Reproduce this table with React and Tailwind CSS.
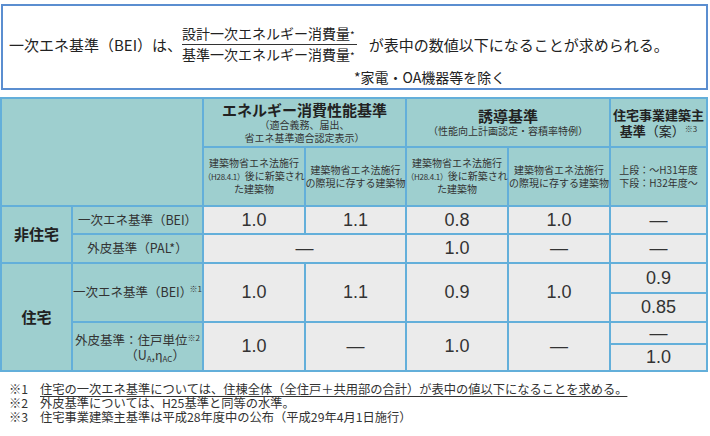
import React from "react";

const head = "bg-[#9ecfcf] flex items-center justify-center text-center text-[#222]";
const body = "bg-[#ebebeb] flex items-center justify-center text-[18px] text-[#333] font-['Liberation_Sans',Arial,sans-serif]";

function Sub({ lines }) {
  return (
    <div className={`${head} flex-col text-[10px] leading-[12.5px] text-[#333]`}>
      {lines.map((l, i) => (
        <span key={i} className="whitespace-nowrap">{l}</span>
      ))}
    </div>
  );
}

function Label({ children, className = "" }) {
  return <div className={`${head} text-[12.5px] text-[#333] ${className}`}>{children}</div>;
}

function Val({ children, className = "" }) {
  return <div className={`${body} ${className}`}>{children}</div>;
}

const after = (
  <>
    <span className="text-[8px] tracking-[-0.3px]">（H28.4.1）</span>後に新築され
  </>
);

export default function App() {
  return (
    <div className="w-[710px] h-[436px] bg-white font-['Noto_Sans_CJK_JP','Noto_Sans',sans-serif] text-[#222]">
      {/* formula box */}
      <div className="ml-[1px] mt-[4px] w-[707px] h-[86px] border-2 border-[#5b8ed0] pl-[6px] pt-[18px]">
        <div className="flex items-center text-[15px] leading-[19px]">
          <span className="whitespace-nowrap">一次エネ基準（BEI）は、</span>
          <div className="flex flex-col text-[14px] leading-[19px]">
            <span className="border-b border-[#333] whitespace-nowrap pr-[2px]">
              設計一次エネルギー消費量<span className="text-[10px]">*</span>
            </span>
            <span className="whitespace-nowrap">
              基準一次エネルギー消費量<span className="text-[10px]">*</span>
            </span>
          </div>
          <span className="ml-[12px] whitespace-nowrap">が表中の数値以下になることが求められる。</span>
        </div>
        <div className="mt-[4px] pl-[345px] text-[14px] leading-[16px] whitespace-nowrap">*家電・OA機器等を除く</div>
      </div>

      {/* table */}
      <div className="mt-[7px] grid w-[708px] grid-cols-[69px_129px_100px_99px_100px_100px_95px] grid-rows-[47px_57px_26px_27px_28px_27px_20px_25px] gap-[2px] bg-[#63afda] p-[2px]">
        <div className={`${head} col-span-2 row-span-2`} />
        <div className={`${head} col-span-2 flex-col`}>
          <span className="text-[15px] font-bold leading-[17px]">エネルギー消費性能基準</span>
          <span className="text-[10px] leading-[13px] text-[#333]">（適合義務、届出、</span>
          <span className="text-[10px] leading-[13px] text-[#333]">省エネ基準適合認定表示）</span>
        </div>
        <div className={`${head} col-span-2 flex-col`}>
          <span className="text-[15px] font-bold leading-[17px]">誘導基準</span>
          <span className="text-[10px] leading-[14px] text-[#333]">（性能向上計画認定・容積率特例）</span>
        </div>
        <div className={`${head} flex-col`}>
          <span className="text-[13px] font-bold leading-[16px]">住宅事業建築主</span>
          <span className="text-[13px] font-bold leading-[16px]">
            基準<span className="font-normal">（案）</span>
            <sup className="text-[8px] font-normal text-[#333]">※3</sup>
          </span>
        </div>

        <Sub lines={["建築物省エネ法施行", after, "た建築物"]} />
        <Sub lines={["建築物省エネ法施行", "の際現に存する建築物"]} />
        <Sub lines={["建築物省エネ法施行", after, "た建築物"]} />
        <Sub lines={["建築物省エネ法施行", "の際現に存する建築物"]} />
        <Sub lines={["上段：～H31年度", "下段：H32年度～"]} />

        {/* 非住宅 */}
        <div className={`${head} row-span-2 text-[15px] font-bold`}>非住宅</div>
        <Label>一次エネ基準（BEI）</Label>
        <Val>1.0</Val>
        <Val>1.1</Val>
        <Val>0.8</Val>
        <Val>1.0</Val>
        <Val>—</Val>

        <Label>外皮基準（PAL*）</Label>
        <Val className="col-span-2">—</Val>
        <Val>1.0</Val>
        <Val>—</Val>
        <Val>—</Val>

        {/* 住宅 */}
        <div className={`${head} row-span-4 text-[15px] font-bold`}>住宅</div>
        <Label className="row-span-2">
          一次エネ基準（BEI）<sup className="text-[8px]">※1</sup>
        </Label>
        <Val className="row-span-2">1.0</Val>
        <Val className="row-span-2">1.1</Val>
        <Val className="row-span-2">0.9</Val>
        <Val className="row-span-2">1.0</Val>
        <Val>0.9</Val>
        <Val>0.85</Val>

        <Label className="row-span-2 flex-col !items-end pr-[2px] leading-[15px]">
          <span className="whitespace-nowrap">
            外皮基準：住戸単位<sup className="text-[8px]">※2</sup>
          </span>
          <span className="mr-[15px] whitespace-nowrap">
            （U<sub className="text-[8px]">A</sub>,η<sub className="text-[8px]">AC</sub>）
          </span>
        </Label>
        <Val className="row-span-2">1.0</Val>
        <Val className="row-span-2">—</Val>
        <Val className="row-span-2">1.0</Val>
        <Val className="row-span-2">—</Val>
        <Val>—</Val>
        <Val>1.0</Val>
      </div>

      {/* notes */}
      <div className="mt-[10px] pl-[9px] text-[12.25px] leading-[14px] text-[#333]">
        <div className="flex">
          <span className="w-[31px]">※1</span>
          <span className="underline underline-offset-2">住宅の一次エネ基準については、住棟全体（全住戸＋共用部の合計）が表中の値以下になることを求める。</span>
        </div>
        <div className="flex">
          <span className="w-[31px]">※2</span>
          <span>外皮基準については、H25基準と同等の水準。</span>
        </div>
        <div className="flex">
          <span className="w-[31px]">※3</span>
          <span>住宅事業建築主基準は平成28年度中の公布（平成29年4月1日施行）</span>
        </div>
      </div>
    </div>
  );
}
